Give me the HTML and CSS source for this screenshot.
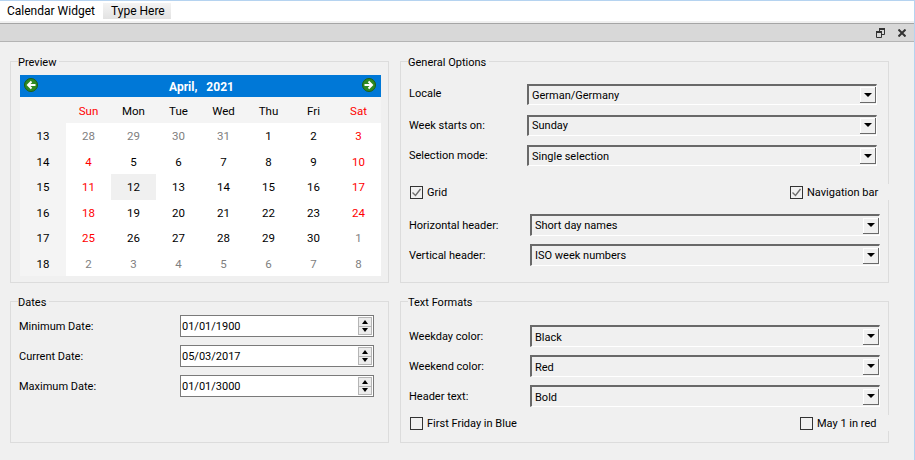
FILE: index.html
```html
<!DOCTYPE html>
<html lang="en">
<head>
    <meta charset="UTF-8">
    <title>Calendar Widget</title>
    <link rel="stylesheet" href="styles.css">
</head>
<body>
    <div class="menubar">
        <span class="menu-title">Calendar Widget</span>
        <span class="menu-item">Type Here</span>
    </div>
    <div class="dockbar">
        <svg width="9" height="10" viewBox="0 0 9 10"><path d="M3.5 3V1.5h5v5H6M.5 4.500h5v5h-5z" fill="none" stroke="#333"/><path d="M3 1h6M0 4h6" stroke="#333" stroke-width="2"/></svg>
        <svg width="8" height="8" viewBox="0 0 8 8"><path d="M.5.5l7 7M7.500.5l-7 7" fill="none" stroke="#333" stroke-width="2"/></svg>
    </div>

    <div class="content">
        <section class="group">
            <div class="group-title">Preview</div>
            <div class="calendar">
                <div class="cal-nav">
                    <svg width="14" height="14" viewBox="0 0 14 14"><circle cx="7" cy="7" r="6.500" fill="#2f8a22" stroke="#1e5f16"/><path d="M11.500 7H5M7.500 3.500L4 7l3.500 3.500" fill="none" stroke="#fff" stroke-width="2"/></svg>
                    <span class="cal-month">April,&nbsp;&nbsp; 2021</span>
                    <svg width="14" height="14" viewBox="0 0 14 14"><circle cx="7" cy="7" r="6.500" fill="#2f8a22" stroke="#1e5f16"/><path d="M2.500 7H9M6.500 3.500L10 7l-3.500 3.500" fill="none" stroke="#fff" stroke-width="2"/></svg>
                </div>
                <div class="cal-grid">
                    <div class="cell head"></div>
                    <div class="cell head red">Sun</div>
                    <div class="cell head">Mon</div>
                    <div class="cell head">Tue</div>
                    <div class="cell head">Wed</div>
                    <div class="cell head">Thu</div>
                    <div class="cell head">Fri</div>
                    <div class="cell head red">Sat</div>

                    <div class="cell week">13</div>
                    <div class="cell muted">28</div><div class="cell muted">29</div><div class="cell muted">30</div><div class="cell muted">31</div><div class="cell">1</div><div class="cell">2</div><div class="cell red">3</div>

                    <div class="cell week">14</div>
                    <div class="cell red">4</div><div class="cell">5</div><div class="cell">6</div><div class="cell">7</div><div class="cell">8</div><div class="cell">9</div><div class="cell red">10</div>

                    <div class="cell week">15</div>
                    <div class="cell red">11</div><div class="cell today">12</div><div class="cell">13</div><div class="cell">14</div><div class="cell">15</div><div class="cell">16</div><div class="cell red">17</div>

                    <div class="cell week">16</div>
                    <div class="cell red">18</div><div class="cell">19</div><div class="cell">20</div><div class="cell">21</div><div class="cell">22</div><div class="cell">23</div><div class="cell red">24</div>

                    <div class="cell week">17</div>
                    <div class="cell red">25</div><div class="cell">26</div><div class="cell">27</div><div class="cell">28</div><div class="cell">29</div><div class="cell">30</div><div class="cell muted">1</div>

                    <div class="cell week">18</div>
                    <div class="cell muted">2</div><div class="cell muted">3</div><div class="cell muted">4</div><div class="cell muted">5</div><div class="cell muted">6</div><div class="cell muted">7</div><div class="cell muted">8</div>
                </div>
            </div>
        </section>

        <section class="group">
            <div class="group-title">General Options</div>
            <div class="rows rows-general">
                <div class="row wide-label"><label class="label-up">Locale</label><div class="combo"><span>German/Germany</span><i class="combo-btn"></i></div></div>
                <div class="row wide-label"><label>Week starts on:</label><div class="combo"><span>Sunday</span><i class="combo-btn"></i></div></div>
                <div class="row wide-label"><label>Selection mode:</label><div class="combo"><span>Single selection</span><i class="combo-btn"></i></div></div>
            </div>
            <div class="checks checks-general">
                <div class="check"><i class="box"><svg width="11" height="11" viewBox="0 0 11 11"><path d="M1.500 5.500l3 3 5-6.500" fill="none" stroke="#6d6d6d" stroke-width="1.400"/></svg></i>Grid</div>
                <div class="check check-right nav-check"><i class="box"><svg width="11" height="11" viewBox="0 0 11 11"><path d="M1.500 5.500l3 3 5-6.500" fill="none" stroke="#6d6d6d" stroke-width="1.400"/></svg></i>Navigation bar</div>
            </div>
            <div class="rows rows-header">
                <div class="row"><label>Horizontal header:</label><div class="combo"><span>Short day names</span><i class="combo-btn"></i></div></div>
                <div class="row"><label>Vertical header:</label><div class="combo"><span>ISO week numbers</span><i class="combo-btn"></i></div></div>
            </div>
        </section>

        <section class="group">
            <div class="group-title">Dates</div>
            <div class="rows rows-dates">
                <div class="row date-row"><label>Minimum Date:</label><div class="spin"><span>01/01/1900</span><div class="spin-btns"><i class="up"></i><i class="down"></i></div></div></div>
                <div class="row date-row"><label>Current Date:</label><div class="spin"><span>05/03/2017</span><div class="spin-btns"><i class="up"></i><i class="down"></i></div></div></div>
                <div class="row date-row"><label>Maximum Date:</label><div class="spin"><span>01/01/3000</span><div class="spin-btns"><i class="up"></i><i class="down"></i></div></div></div>
            </div>
        </section>

        <section class="group">
            <div class="group-title">Text Formats</div>
            <div class="rows rows-formats">
                <div class="row"><label>Weekday color:</label><div class="combo"><span>Black</span><i class="combo-btn"></i></div></div>
                <div class="row"><label>Weekend color:</label><div class="combo"><span>Red</span><i class="combo-btn"></i></div></div>
                <div class="row"><label>Header text:</label><div class="combo"><span>Bold</span><i class="combo-btn"></i></div></div>
            </div>
            <div class="checks checks-formats">
                <div class="check"><i class="box"></i>First Friday in Blue</div>
                <div class="check check-right may-check"><i class="box"></i>May 1 in red</div>
            </div>
        </section>
    </div>
</body>
</html>
```

FILE: styles.css
```css
* {
    box-sizing: border-box;
}
html, body {
    height: 100%;
}
body {
    margin: 0;
    overflow: hidden;
    background-color: #f0f0f0;
    color: #000;
    font-family: Roboto, sans-serif;
    font-size: 11px;
    border-top: 1px solid #b5d3f0;
    border-right: 1px solid #b5d3f0;
}
.menubar {
    height: 20px;
    background-color: #fff;
    display: flex;
    align-items: center;
    padding-left: 7px;
    font-size: 12px;
}
.menu-title {
    width: 96px;
}
.menu-item {
    width: 68px;
    height: 16px;
    line-height: 16px;
    padding-left: 8px;
    background: linear-gradient(#f4f4f4, #e2e2e2);
}
.dockbar {
    margin-top: 2px;
    height: 19px;
    background-color: #d8d8d8;
    border-top: 1px solid #a5a5a5;
    border-bottom: 1px solid #b4b4b4;
    display: flex;
    align-items: center;
    justify-content: flex-end;
    gap: 13px;
    padding-right: 8px;
}
.content {
    display: grid;
    grid-template-columns: 379px 489px;
    grid-template-rows: 222px 142px;
    column-gap: 11px;
    row-gap: 18px;
    padding: 19px 0 0 10px;
}
.group {
    border: 1px solid #dcdcdc;
    padding: 0 8px;
}
.group-title {
    width: fit-content;
    margin: -8px 0 0 -1px;
    padding: 1px 3px 0 0;
    height: 16px;
    line-height: 16px;
    background-color: #f0f0f0;
}
/* calendar */
.calendar {
    margin: 5px 0 0 1px;
    width: 361px;
    font-size: 11.5px;
}
.cal-nav {
    height: 22px;
    background-color: #0078d7;
    color: #fff;
    font-weight: bold;
    font-size: 12px;
    display: flex;
    align-items: center;
    justify-content: space-between;
    padding: 0 5px 2px 4px;
}
.cal-month {
    margin-left: 3px;
    padding-top: 4px;
}
.cal-grid {
    display: grid;
    grid-template-columns: 46px repeat(7, 45px);
    grid-template-rows: 26px repeat(6, 25.5px);
    background-color: #fff;
}
.cell {
    display: flex;
    align-items: center;
    justify-content: center;
    padding-top: 1px;
}
.head, .week {
    background-color: #f4f4f4;
}
.today {
    background-color: #f0f0f0;
}
.red {
    color: #f00;
}
.muted {
    color: #808080;
}
/* form rows */
.rows {
    display: flex;
    flex-direction: column;
    gap: 8px;
}
.row {
    display: flex;
    align-items: center;
    height: 22px;
}
.row label {
    width: 121px;
    flex-shrink: 0;
}
.row .label-up {
    margin-top: -3px;
}
.wide-label label {
    width: 118px;
}
.rows-general {
    margin-top: 14px;
    gap: 9.5px;
}
.rows-general .row, .rows-general .combo {
    height: 21px;
}
.rows-header {
    margin-top: 14px;
}
.rows-formats {
    margin-top: 15px;
}
.rows-formats .combo span {
    padding-top: 1px;
}
.rows-dates {
    margin-top: 5px;
}
.combo {
    width: 350px;
    height: 22px;
    border-top: 2px solid #696969;
    border-left: 2px solid #696969;
    border-right: 1px solid #fff;
    border-bottom: 1px solid #fff;
    display: flex;
    align-items: center;
    justify-content: space-between;
    padding-left: 3px;
}
.combo-btn {
    width: 16px;
    height: 16px;
    background-color: #f0f0f0;
    border-right: 1px solid #696969;
    border-bottom: 1px solid #696969;
    box-shadow: inset 1px 1px 0 #fff;
    display: flex;
    align-items: center;
    justify-content: center;
}
.combo-btn::after {
    content: "";
    border-top: 4px solid #000;
    border-left: 4px solid transparent;
    border-right: 4px solid transparent;
}
.date-row label {
    width: 161px;
}
.spin {
    width: 194px;
    height: 22px;
    background-color: #fff;
    border: 1px solid #7a7a7a;
    display: flex;
    align-items: center;
    justify-content: space-between;
    padding: 0 1px;
}
.spin-btns {
    width: 14px;
    height: 18px;
    display: flex;
    flex-direction: column;
}
.spin-btns i {
    flex: 1;
    border: 1px solid #b5b5b5;
    background-color: #ececec;
    display: flex;
    align-items: center;
    justify-content: center;
}
.spin-btns .down {
    border-top: none;
}
.spin-btns i::after {
    content: "";
    border-left: 3px solid transparent;
    border-right: 3px solid transparent;
}
.spin-btns .up::after {
    border-bottom: 4px solid #000;
}
.spin-btns .down::after {
    border-top: 4px solid #000;
}
/* checkboxes */
.checks {
    display: flex;
    justify-content: space-between;
    height: 16px;
    margin-right: -9px;
}
.check {
    display: flex;
    align-items: center;
    height: 16px;
    padding-left: 1px;
}
.check-right {
    background-color: #f0f0f0;
}
.nav-check {
    width: 100px;
}
.may-check {
    width: 90px;
}
.checks-general {
    margin-top: 18px;
}
.checks-formats {
    margin-top: 8px;
}
.box {
    width: 13px;
    height: 13px;
    border: 1px solid #333;
    background-color: #f0f0f0;
    margin-right: 4px;
    display: flex;
    align-items: center;
    justify-content: center;
}
```
